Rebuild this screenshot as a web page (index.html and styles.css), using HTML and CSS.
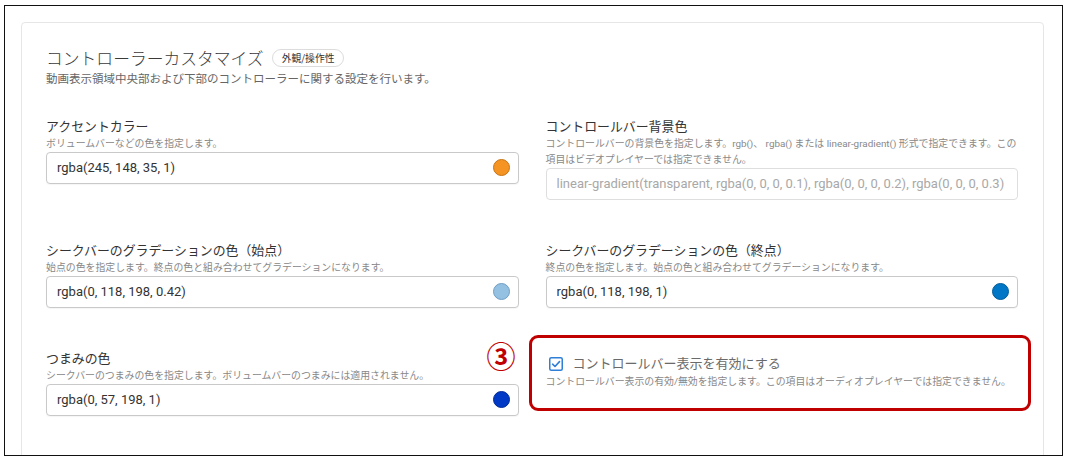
FILE: index.html
```html
<!DOCTYPE html>
<html lang="ja">
<head>
<meta charset="utf-8">
<link rel="stylesheet" href="styles.css">
</head>
<body>
<div class="frame">
  <section class="card">
    <div class="head">
      <h1 class="title">コントローラーカスタマイズ</h1>
      <span class="badge">外観/操作性</span>
    </div>
    <p class="desc">動画表示領域中央部および下部のコントローラーに関する設定を行います。</p>

    <div class="grid">
      <div class="field">
        <div class="label">アクセントカラー</div>
        <div class="hint">ボリュームバーなどの色を指定します。</div>
        <div class="input">
          <span class="value">rgba(245, 148, 35, 1)</span>
          <span class="dot dot-orange"></span>
        </div>
      </div>
      <div class="field">
        <div class="label">コントロールバー背景色</div>
        <div class="hint">コントロールバーの背景色を指定します。rgb()、 rgba() または linear-gradient() 形式で指定できます。この項目はビデオプレイヤーでは指定できません。</div>
        <div class="input input-disabled">
          <span class="value placeholder">linear-gradient(transparent, rgba(0, 0, 0, 0.1), rgba(0, 0, 0, 0.2), rgba(0, 0, 0, 0.3)</span>
        </div>
      </div>

      <div class="field">
        <div class="label">シークバーのグラデーションの色（始点）</div>
        <div class="hint">始点の色を指定します。終点の色と組み合わせてグラデーションになります。</div>
        <div class="input">
          <span class="value">rgba(0, 118, 198, 0.42)</span>
          <span class="dot dot-light"></span>
        </div>
      </div>
      <div class="field">
        <div class="label">シークバーのグラデーションの色（終点）</div>
        <div class="hint">終点の色を指定します。始点の色と組み合わせてグラデーションになります。</div>
        <div class="input">
          <span class="value">rgba(0, 118, 198, 1)</span>
          <span class="dot dot-blue"></span>
        </div>
      </div>

      <div class="field">
        <div class="label">つまみの色</div>
        <div class="hint">シークバーのつまみの色を指定します。ボリュームバーのつまみには適用されません。</div>
        <div class="input">
          <span class="value">rgba(0, 57, 198, 1)</span>
          <span class="dot dot-dark"></span>
        </div>
      </div>
      <div class="field field-check">
        <span class="marker">③</span>
        <span class="highlight"></span>
        <label class="check-row">
          <span class="checkbox">
            <svg width="14" height="14" viewBox="0 0 14 14">
              <rect x="0.75" y="0.75" width="12.5" height="12.5" rx="1.5" fill="#fff" stroke="#2f7fd6" stroke-width="1.5"/>
              <path d="M3.6 7.2 L6 9.5 L10.5 4.6" fill="none" stroke="#2f7fd6" stroke-width="1.6" stroke-linecap="round" stroke-linejoin="round"/>
            </svg>
          </span>
          <span class="check-label">コントロールバー表示を有効にする</span>
        </label>
        <div class="hint">コントロールバー表示の有効/無効を指定します。この項目はオーディオプレイヤーでは指定できません。</div>
      </div>
    </div>
  </section>
</div>
</body>
</html>
```

FILE: styles.css
```css
* { box-sizing: border-box; }

body {
  margin: 0;
  background: #fff;
  font-family: Roboto, "Noto Sans CJK JP", sans-serif;
  color: #333;
}

.frame {
  margin: 5px 0 0 4px;
  width: 1059px;
  height: 451px;
  border: 1px solid #111;
  overflow: hidden;
  background: #fff;
}

.card {
  margin: 16px 0 0 16px;
  width: 1023px;
  height: 520px;
  border: 1px solid #e6e6e6;
  border-radius: 4px;
  padding: 23px 25px 0 24px;
  background: #fff;
}

.head {
  display: flex;
  align-items: center;
  gap: 8px;
  height: 24px;
}

.title {
  margin: 0;
  font-size: 16.8px;
  font-weight: 300;
  line-height: 24px;
  color: #3a3a3a;
  font-family: "Noto Sans CJK JP", sans-serif;
}

.badge {
  display: inline-flex;
  align-items: center;
  height: 18px;
  padding: 0 9px;
  border: 1px solid #dcdcdc;
  border-radius: 9px;
  font-size: 9.8px;
  color: #333;
  font-family: "Noto Sans CJK JP", sans-serif;
}

.desc {
  margin: 1px 0 0;
  font-size: 11.5px;
  line-height: 16px;
  color: #666;
}

.grid {
  display: grid;
  grid-template-columns: 1fr 1fr;
  column-gap: 27px;
  row-gap: 41px;
  margin-top: 29.5px;
  align-items: start;
}

.field { position: relative; }

.label {
  font-size: 12.9px;
  line-height: 19px;
  color: #333;
}

.hint {
  font-size: 9.9px;
  line-height: 16px;
  color: #888;
}

.input {
  display: flex;
  align-items: center;
  justify-content: space-between;
  height: 32px;
  padding: 0 8px 0 10px;
  border: 1px solid #c9c9c9;
  border-radius: 4px;
  background: #fff;
  box-shadow: 0 1px 1px rgba(0,0,0,0.04);
}

.input-disabled {
  border-color: #dedede;
  box-shadow: none;
}

.value {
  font-size: 13px;
  color: #333;
  white-space: nowrap;
  overflow: hidden;
}

.placeholder { color: #a8a8a8; }

.dot {
  width: 17px;
  height: 17px;
  border-radius: 50%;
  flex: none;
}
.dot-orange { background: #f59423; border: 1px solid #c87414; }
.dot-light  { background: #94c0e1; border: 1px solid #6f9fc6; }
.dot-blue   { background: #0076c6; border: 1px solid #005c9c; }
.dot-dark   { background: #0039c6; border: 1px solid #002b99; }

.field-check { padding-top: 5px; }

.check-row {
  display: flex;
  align-items: center;
  gap: 10px;
  height: 20px;
  padding-left: 3px;
}

.checkbox { display: flex; width: 14px; height: 14px; }

.check-label {
  font-size: 13px;
  color: #6a6a6a;
  line-height: 20px;
}

.field-check .hint { margin-top: 0; }

.marker {
  position: absolute;
  left: -59px;
  top: -8px;
  font-family: "Noto Sans CJK JP", sans-serif;
  font-size: 29px;
  line-height: 1;
  font-weight: 700;
  color: #c00000;
}

.highlight {
  position: absolute;
  left: -17px;
  top: -13.5px;
  width: 502px;
  height: 76px;
  border: 3px solid #c00000;
  border-radius: 9px;
  pointer-events: none;
}
```
